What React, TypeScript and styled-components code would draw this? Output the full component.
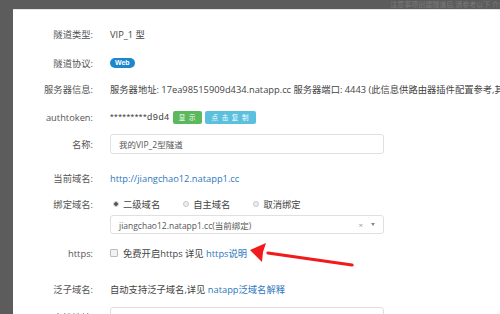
import React from 'react';
import styled, { createGlobalStyle } from 'styled-components';

const GlobalStyle = createGlobalStyle`
  html, body {
    margin: 0;
    padding: 0;
    background: #5c5c5c;
  }
  body {
    font-family: 'Open Sans', 'Noto Sans CJK SC', sans-serif;
    font-size: 9.3px;
    color: #444;
  }
`;

function App() {
  return (
    <Frame>
      <GlobalStyle />
      <TopBar>
        <span>注意事项创建隧道后,请参考以下 介绍详下</span>
      </TopBar>
      <Panel>
        <Row top={14}>
          <Label>隧道类型:</Label>
          <Value>VIP_1 型</Value>
        </Row>
        <Row top={9}>
          <Label>隧道协议:</Label>
          <Value>
            <Badge>Web</Badge>
          </Value>
        </Row>
        <Row top={6}>
          <Label>服务器信息:</Label>
          <Value>
            服务器地址: 17ea98515909d434.natapp.cc 服务器端口: 4443 (此信息供路由器插件配置参考,其他情况无需理会)
          </Value>
        </Row>
        <Row top={8}>
          <Label>authtoken:</Label>
          <Value>
            <Token>*********d9d4</Token>
            <SmallButton color="#5cb85c">显 示</SmallButton>
            <SmallButton color="#5bc0de">点 击 复 制</SmallButton>
          </Value>
        </Row>
        <Row top={7}>
          <Label>名称:</Label>
          <Value>
            <TextBox>我的VIP_2型隧道</TextBox>
          </Value>
        </Row>
        <Row top={14}>
          <Label>当前域名:</Label>
          <Value>
            <Link>http://jiangchao12.natapp1.cc</Link>
          </Value>
        </Row>
        <Row top={6}>
          <Label>绑定域名:</Label>
          <Value>
            <RadioItem>
              <RadioDot checked />
              二级域名
            </RadioItem>
            <RadioItem>
              <RadioDot />
              自主域名
            </RadioItem>
            <RadioItem>
              <RadioDot />
              取消绑定
            </RadioItem>
          </Value>
        </Row>
        <Row top={1} height={19}>
          <Label />
          <Value>
            <SelectBox>
              <SelectText>jiangchao12.natapp1.cc(当前绑定)</SelectText>
              <Clear>×</Clear>
              <Caret />
            </SelectBox>
          </Value>
        </Row>
        <Row top={9}>
          <Label>https:</Label>
          <Value>
            <CheckBox />
            免费开启https 详见&nbsp;<Link>https说明</Link>
          </Value>
        </Row>
        <Row top={16}>
          <Label>泛子域名:</Label>
          <Value>
            自动支持泛子域名,详见&nbsp;<Link>natapp泛域名解释</Link>
          </Value>
        </Row>
        <Row top={8}>
          <Label>本地地址:</Label>
          <Value>
            <TextBox>127.0.0.1</TextBox>
          </Value>
        </Row>

        <Arrow width="120" height="30" viewBox="0 0 120 30">
          <path d="M102 22 L18 10" stroke="#f21a1a" strokeWidth="3.2" strokeLinecap="round" fill="none" />
          <path d="M0 7 L16 0 L13 9 L12 19 Z" fill="#f21a1a" />
        </Arrow>
      </Panel>
    </Frame>
  );
}

const Frame = styled.div`
  width: 500px;
  height: 314px;
  overflow: hidden;
  display: flex;
  flex-direction: column;
  padding-left: 13px;
  box-sizing: border-box;
  background: #5c5c5c;
`;

const TopBar = styled.div`
  height: 9px;
  flex-shrink: 0;
  display: flex;
  justify-content: flex-end;
  overflow: hidden;

  span {
    font-size: 7px;
    line-height: 7px;
    color: #7a7a7a;
    margin-right: -20px;
    margin-top: 1px;
    white-space: nowrap;
  }
`;

const Panel = styled.div`
  position: relative;
  flex: 1;
  background: #fff;
  border-top: 1px solid #e4e4e4;
  overflow: hidden;
`;

const Row = styled.div<{ top: number; height?: number }>`
  display: flex;
  align-items: center;
  height: ${({ height }) => height ?? 20}px;
  margin-top: ${({ top }) => top}px;
`;

const Label = styled.div`
  width: 80px;
  flex-shrink: 0;
  text-align: right;
  color: #555;
  white-space: nowrap;
`;

const Value = styled.div`
  display: flex;
  align-items: center;
  margin-left: 17px;
  white-space: nowrap;
  color: #444;
`;

const Badge = styled.span`
  display: inline-block;
  background: #1b87cc;
  color: #fff;
  font-family: 'Liberation Sans', sans-serif;
  font-weight: bold;
  font-size: 7px;
  line-height: 10px;
  height: 10px;
  padding: 0 5px;
  border-radius: 5px;
`;

const Token = styled.span`
  font-family: 'Liberation Sans', sans-serif;
  letter-spacing: 0.5px;
`;

const SmallButton = styled.span<{ color: string }>`
  display: inline-block;
  background: ${({ color }) => color};
  color: #fff;
  font-size: 6.5px;
  letter-spacing: 1px;
  line-height: 13px;
  height: 13px;
  padding: 0 6px;
  border-radius: 2px;
  margin-left: 3px;
`;

const TextBox = styled.div`
  width: 274px;
  height: 20px;
  box-sizing: border-box;
  border: 1px solid #e0e0e0;
  border-radius: 3px;
  padding: 0 8px;
  display: flex;
  align-items: center;
  color: #555;
  font-size: 8.5px;
`;

const Link = styled.span`
  color: #2c77bd;
`;

const RadioItem = styled.span`
  display: inline-flex;
  align-items: center;
  margin-right: 20px;
  color: #444;
`;

const RadioDot = styled.span<{ checked?: boolean }>`
  width: 6px;
  height: 6px;
  border-radius: 50%;
  box-sizing: border-box;
  border: 1px solid #c8c8c8;
  background: ${({ checked }) => (checked ? 'radial-gradient(circle, #555 0 1.6px, #eee 2px)' : '#eee')};
  margin: 0 4px 0 3px;
`;

const SelectBox = styled.div`
  width: 274px;
  height: 19px;
  box-sizing: border-box;
  border: 1px solid #e0e0e0;
  border-radius: 3px;
  padding: 0 8px;
  display: flex;
  align-items: center;
  font-size: 8.5px;
  color: #555;
`;

const SelectText = styled.span`
  flex: 1;
`;

const Clear = styled.span`
  color: #999;
  font-size: 8px;
  margin-right: 8px;
`;

const Caret = styled.span`
  width: 0;
  height: 0;
  border-left: 2.5px solid transparent;
  border-right: 2.5px solid transparent;
  border-top: 3px solid #888;
`;

const CheckBox = styled.span`
  width: 6px;
  height: 6px;
  border: 1px solid #bbb;
  background: #f2f2f2;
  border-radius: 1px;
  margin-right: 5px;
`;

const Arrow = styled.svg`
  position: absolute;
  left: 237px;
  top: 233px;
`;

export default App;
